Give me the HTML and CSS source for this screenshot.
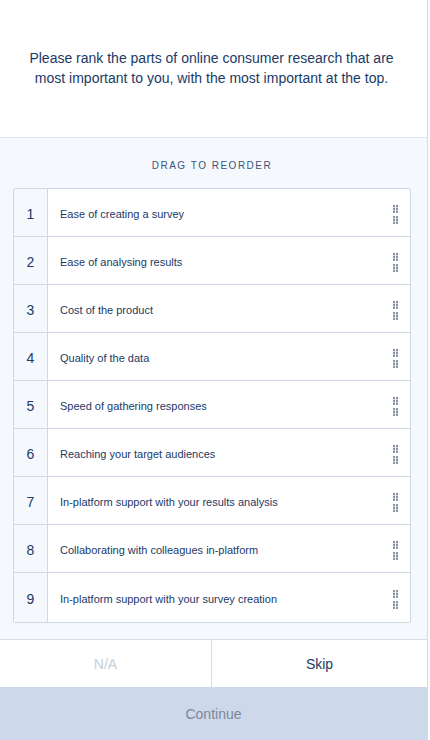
FILE: index.html
```html
<!DOCTYPE html>
<html>
<head>
<meta charset="utf-8">
<link rel="stylesheet" href="styles.css">
</head>
<body>
<div class="page">
  <header class="question">
    <p>Please rank the parts of online consumer research that are most important to you, with the most important at the top.</p>
  </header>
  <section class="ranking">
    <div class="hint">DRAG TO REORDER</div>
    <ol class="list">
      <li class="row"><span class="num">1</span><span class="label">Ease of creating a survey</span><span class="grip"></span></li>
      <li class="row"><span class="num">2</span><span class="label">Ease of analysing results</span><span class="grip"></span></li>
      <li class="row"><span class="num">3</span><span class="label">Cost of the product</span><span class="grip"></span></li>
      <li class="row"><span class="num">4</span><span class="label">Quality of the data</span><span class="grip"></span></li>
      <li class="row"><span class="num">5</span><span class="label">Speed of gathering responses</span><span class="grip"></span></li>
      <li class="row"><span class="num">6</span><span class="label">Reaching your target audiences</span><span class="grip"></span></li>
      <li class="row"><span class="num">7</span><span class="label">In-platform support with your results analysis</span><span class="grip"></span></li>
      <li class="row"><span class="num">8</span><span class="label">Collaborating with colleagues in-platform</span><span class="grip"></span></li>
      <li class="row"><span class="num">9</span><span class="label">In-platform support with your survey creation</span><span class="grip"></span></li>
    </ol>
  </section>
  <div class="actions">
    <button class="act na">N/A</button>
    <button class="act skip">Skip</button>
  </div>
  <button class="continue">Continue</button>
</div>
</body>
</html>
```
FILE: styles.css
```css
html, body {
  margin: 0;
  padding: 0;
  background: #ffffff;
}
body {
  font-family: "Liberation Sans", Arial, sans-serif;
  color: #1b3a66;
}
.page {
  width: 427px;
  height: 740px;
  border-right: 1px solid #d3dbe8;
  display: flex;
  flex-direction: column;
  overflow: hidden;
}
.question {
  height: 138px;
  flex: none;
  border-bottom: 1px solid #e0e6ef;
  display: flex;
  align-items: center;
  justify-content: center;
  padding: 0 26px 1px 22px;
  box-sizing: border-box;
}
.question p {
  margin: 0;
  font-size: 14px;
  line-height: 20px;
  text-align: center;
  color: #1b3a66;
}
.ranking {
  flex: none;
  background: #f5f8fd;
  padding: 22px 16px 16px 13px;
  border-bottom: 1px solid #d8dfeb;
}
.hint {
  text-align: center;
  font-size: 10px;
  letter-spacing: 1.5px;
  color: #3d5479;
  line-height: 12px;
  margin-bottom: 16px;
}
.list {
  list-style: none;
  margin: 0;
  padding: 0;
  border: 1px solid #cfd8e7;
  border-radius: 2px;
  background: #ffffff;
}
.row {
  display: flex;
  align-items: center;
  height: 47px;
  border-top: 1px solid #cfd8e7;
}
.row:first-child {
  border-top: none;
}
.row:last-child {
  height: 49px;
}
.num {
  width: 34px;
  height: 100%;
  flex: none;
  display: flex;
  align-items: center;
  justify-content: center;
  box-sizing: border-box;
  padding-top: 2px;
  background: #f5f8fd;
  border-right: 1px solid #cfd8e7;
  font-size: 14px;
  color: #1b3a66;
}
.label {
  flex: 1;
  padding-left: 12px;
  padding-top: 2px;
  font-size: 11px;
  color: #1b3a66;
}
.grip {
  width: 6px;
  height: 20px;
  margin-right: 11px;
  margin-top: 4px;
  flex: none;
  background-image:
    linear-gradient(to right, transparent 2px, #ffffff 2px, #ffffff 3px, transparent 3px),
    linear-gradient(to bottom, #8b94a7 0, #8b94a7 2px, #c9cfda 2px, #c9cfda 3px, #8b94a7 3px, #8b94a7 5px, #c9cfda 5px, #c9cfda 6px, #8b94a7 6px, #8b94a7 8px, transparent 8px, transparent 11px, #8b94a7 11px, #8b94a7 13px, #c9cfda 13px, #c9cfda 14px, #8b94a7 14px, #8b94a7 16px, #c9cfda 16px, #c9cfda 17px, #8b94a7 17px, #8b94a7 19px, transparent 19px);
  background-size: 3px 20px, 6px 20px;
  background-repeat: repeat-x, no-repeat;
}
.actions {
  flex: none;
  display: flex;
  height: 47px;
}
.act {
  border: none;
  background: #ffffff;
  font-family: inherit;
  font-size: 14px;
  padding: 0;
  margin: 0;
}
.na {
  flex: 0 0 212px;
  color: #c6cedd;
  border-right: 1px solid #d3dbe8;
}
.skip {
  flex: 1;
  color: #1b3a66;
}
.continue {
  flex: 1;
  border: none;
  margin: 0;
  background: #cdd8ea;
  color: #7c8699;
  font-family: inherit;
  font-size: 14px;
  padding: 0;
}
```
